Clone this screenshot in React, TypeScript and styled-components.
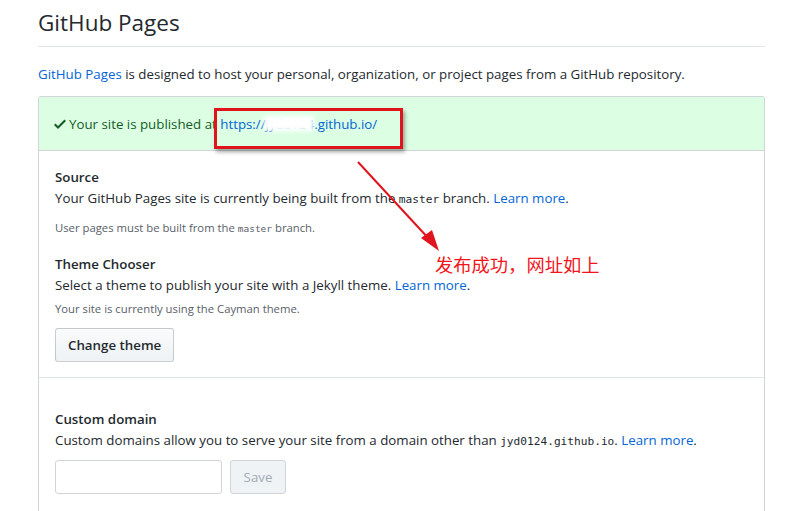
import React from 'react';
import styled, { createGlobalStyle } from 'styled-components';

const GlobalStyle = createGlobalStyle`
  html, body {
    margin: 0;
    padding: 0;
    background: #fff;
  }
  body {
    font-family: "Open Sans", "Liberation Sans", sans-serif;
    color: #24292e;
    width: 812px;
    height: 511px;
    overflow: hidden;
  }
`;

const Page = styled.div`
  position: relative;
  width: 727px;
  padding: 8px 0 0 38px;
`;

const Title = styled.h2`
  margin: 0;
  padding-bottom: 8px;
  font-size: 22.5px;
  font-weight: 400;
  line-height: 30px;
  color: #24292e;
  border-bottom: 1px solid #e1e4e8;
`;

const Lead = styled.p`
  margin: 16px 0 11px;
  font-size: 13.3px;
  line-height: 22px;
`;

const Link = styled.a`
  color: #0366d6;
  text-decoration: none;
`;

const Box = styled.div`
  border: 1px solid #d1d5da;
  border-bottom: none;
  border-radius: 3px 3px 0 0;
`;

const Flash = styled.div`
  position: relative;
  display: flex;
  align-items: center;
  gap: 3px;
  height: 53px;
  padding: 0 15px;
  background: #dcffe4;
  color: #165c26;
  font-size: 13.3px;
  border-bottom: 1px solid #d1d5da;
`;

const Blur = styled.span`
  position: absolute;
  left: 225px;
  top: 19px;
  width: 50px;
  height: 15px;
  background: #fff;
  filter: blur(2px);
`;

const Section = styled.div<{ $pad?: string }>`
  padding: ${(p) => p.$pad || '16px'};
  border-bottom: 1px solid #e1e4e8;
`;

const Heading = styled.div<{ $top?: number }>`
  margin-top: ${(p) => p.$top || 0}px;
  font-size: 13.3px;
  font-weight: 600;
  line-height: 20px;
`;

const Text = styled.div`
  font-size: 13.3px;
  line-height: 22px;
`;

const Note = styled.div<{ $top?: number }>`
  margin-top: ${(p) => p.$top || 0}px;
  font-size: 11.3px;
  line-height: 18px;
  color: #586069;
`;

const Code = styled.code`
  font-family: "DejaVu Sans Mono", "Liberation Mono", monospace;
  font-size: 84%;
`;

const Button = styled.button`
  margin-top: 10px;
  height: 34px;
  padding: 0 12px;
  font-family: inherit;
  font-size: 13.3px;
  font-weight: 600;
  color: #24292e;
  background: linear-gradient(#fafbfc, #eff3f6 90%);
  border: 1px solid rgba(27, 31, 35, 0.2);
  border-radius: 3px;
`;

const Row = styled.div`
  display: flex;
  gap: 8px;
  margin-top: 7px;
`;

const Input = styled.input`
  width: 167px;
  height: 34px;
  box-sizing: border-box;
  border: 1px solid #d1d5da;
  border-radius: 3px;
`;

const SaveButton = styled.button`
  width: 56px;
  height: 34px;
  font-family: inherit;
  font-size: 13.3px;
  color: #a3aab1;
  background: #eff3f6;
  border: 1px solid #d1d5da;
  border-radius: 3px;
`;

const Highlight = styled.div`
  position: absolute;
  left: 214px;
  top: 108px;
  width: 183px;
  height: 35px;
  border: 3px solid #e0141c;
  box-shadow: 2px 3px 4px rgba(0, 0, 0, 0.35);
`;

const Arrow = styled.svg`
  position: absolute;
  left: 0;
  top: 0;
  pointer-events: none;
`;

const Annotation = styled.div`
  position: absolute;
  left: 435px;
  top: 252px;
  font-family: "Noto Sans CJK SC", sans-serif;
  font-size: 18.3px;
  line-height: 24px;
  color: #f2151a;
`;

const Check = () => (
  <svg width="12" height="16" viewBox="0 0 12 16" fill="#165c26">
    <path d="M12 5l-8 8-4-4 1.5-1.5L4 10l6.5-6.5L12 5z" />
  </svg>
);

export default function App() {
  return (
    <Page>
      <GlobalStyle />
      <Title>GitHub Pages</Title>
      <Lead>
        <Link>GitHub Pages</Link> is designed to host your personal, organization, or project pages from a
        GitHub repository.
      </Lead>
      <Box>
        <Flash>
          <Check />
          <span>
            Your site is published at <Link>https://jyd0124.github.io/</Link>
          </span>
          <Blur />
        </Flash>
        <Section $pad="16px 16px 15px">
          <Heading>Source</Heading>
          <Text>
            Your GitHub Pages site is currently being built from the <Code>master</Code> branch.{' '}
            <Link>Learn more</Link>.
          </Text>
          <Note $top={8}>
            User pages must be built from the <Code>master</Code> branch.
          </Note>
          <Heading $top={16}>Theme Chooser</Heading>
          <Text>
            Select a theme to publish your site with a Jekyll theme. <Link>Learn more</Link>.
          </Text>
          <Note $top={4}>Your site is currently using the Cayman theme.</Note>
          <Button>Change theme</Button>
        </Section>
        <Section $pad="31px 16px 20px">
          <Heading>Custom domain</Heading>
          <Text>
            Custom domains allow you to serve your site from a domain other than{' '}
            <Code>jyd0124.github.io</Code>. <Link>Learn more</Link>.
          </Text>
          <Row>
            <Input />
            <SaveButton disabled>Save</SaveButton>
          </Row>
        </Section>
      </Box>
      <Highlight />
      <Arrow width="812" height="511" viewBox="0 0 812 511">
        <line x1="358" y1="162" x2="430" y2="240" stroke="#e0141c" strokeWidth="2" />
        <polygon points="439,251 421,238 432,230" fill="#e0141c" />
      </Arrow>
      <Annotation>发布成功，网址如上</Annotation>
    </Page>
  );
}
